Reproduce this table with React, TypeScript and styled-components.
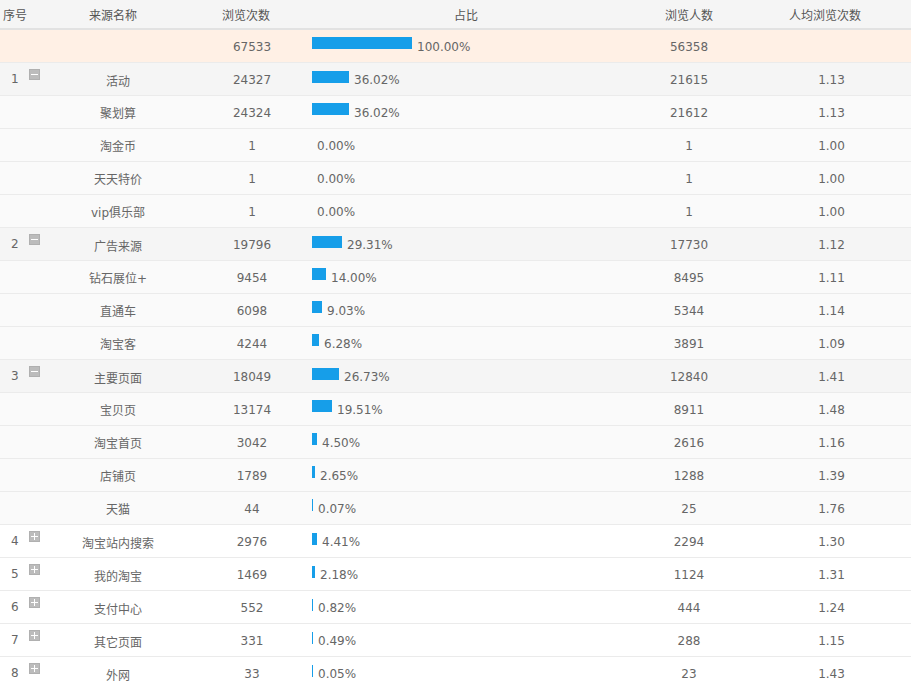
import React from "react";
import styled, { createGlobalStyle } from "styled-components";

const GlobalStyle = createGlobalStyle`
  body {
    margin: 0;
    background: #fff;
    font-family: "DejaVu Sans", "Noto Sans CJK SC", sans-serif;
    font-size: 12px;
    color: #666;
  }
`;

const cols = "62px 112px 132px 320px 126px 159px";

const Table = styled.div`
  width: 911px;
`;

const HeaderRow = styled.div`
  display: grid;
  grid-template-columns: ${cols};
  height: 28px;
  background: #f5f5f5;
  border-bottom: 2px solid #e2e2e2;
  color: #555;
`;

const HeadCell = styled.div<{ align?: string; pl?: number; pr?: number }>`
  display: flex;
  align-items: center;
  justify-content: ${(p) => p.align || "center"};
  padding-left: ${(p) => p.pl || 0}px;
  padding-right: ${(p) => p.pr || 0}px;
`;

type Kind = "total" | "group" | "child" | "single";

const bg: Record<Kind, string> = {
  total: "#fff0e5",
  group: "#f5f5f5",
  child: "#fafafa",
  single: "#ffffff",
};

const Row = styled.div<{ kind: Kind }>`
  display: grid;
  grid-template-columns: ${cols};
  height: 32px;
  background: ${(p) => bg[p.kind]};
  border-bottom: 1px solid #ebebeb;
`;

const Cell = styled.div<{ pl?: number }>`
  display: flex;
  align-items: center;
  justify-content: center;
  padding-top: 1px;
  padding-left: ${(p) => p.pl || 0}px;
`;

const IndexCell = styled.div`
  display: flex;
  align-items: flex-start;
  padding-left: 11px;
`;

const IndexNum = styled.span`
  width: 18px;
  line-height: 33px;
`;

const Toggle = styled.span<{ open: boolean }>`
  margin-top: 6px;
  width: 11px;
  height: 11px;
  box-sizing: border-box;
  background: #bcbcbc;
  border: 1px solid #b0b0b0;
  position: relative;
  &::before,
  &::after {
    content: "";
    position: absolute;
    background: #fff;
  }
  &::before {
    left: 1px;
    right: 1px;
    top: 4px;
    height: 1px;
  }
  &::after {
    display: ${(p) => (p.open ? "none" : "block")};
    top: 1px;
    bottom: 1px;
    left: 4px;
    width: 1px;
  }
`;

const RatioCell = styled.div`
  display: flex;
  align-items: center;
  padding-left: 6px;
  padding-top: 1px;
`;

const Bar = styled.span`
  display: inline-block;
  height: 12px;
  background: #169ee9;
  margin-right: 5px;
  margin-bottom: 7px;
`;

type Item = {
  idx?: number;
  name: string;
  views: string;
  pct: string;
  users: string;
  avg: string;
  kind: Kind;
};

const data: Item[] = [
  { name: "", views: "67533", pct: "100.00", users: "56358", avg: "", kind: "total" },
  { idx: 1, name: "活动", views: "24327", pct: "36.02", users: "21615", avg: "1.13", kind: "group" },
  { name: "聚划算", views: "24324", pct: "36.02", users: "21612", avg: "1.13", kind: "child" },
  { name: "淘金币", views: "1", pct: "0.00", users: "1", avg: "1.00", kind: "child" },
  { name: "天天特价", views: "1", pct: "0.00", users: "1", avg: "1.00", kind: "child" },
  { name: "vip俱乐部", views: "1", pct: "0.00", users: "1", avg: "1.00", kind: "child" },
  { idx: 2, name: "广告来源", views: "19796", pct: "29.31", users: "17730", avg: "1.12", kind: "group" },
  { name: "钻石展位+", views: "9454", pct: "14.00", users: "8495", avg: "1.11", kind: "child" },
  { name: "直通车", views: "6098", pct: "9.03", users: "5344", avg: "1.14", kind: "child" },
  { name: "淘宝客", views: "4244", pct: "6.28", users: "3891", avg: "1.09", kind: "child" },
  { idx: 3, name: "主要页面", views: "18049", pct: "26.73", users: "12840", avg: "1.41", kind: "group" },
  { name: "宝贝页", views: "13174", pct: "19.51", users: "8911", avg: "1.48", kind: "child" },
  { name: "淘宝首页", views: "3042", pct: "4.50", users: "2616", avg: "1.16", kind: "child" },
  { name: "店铺页", views: "1789", pct: "2.65", users: "1288", avg: "1.39", kind: "child" },
  { name: "天猫", views: "44", pct: "0.07", users: "25", avg: "1.76", kind: "child" },
  { idx: 4, name: "淘宝站内搜索", views: "2976", pct: "4.41", users: "2294", avg: "1.30", kind: "single" },
  { idx: 5, name: "我的淘宝", views: "1469", pct: "2.18", users: "1124", avg: "1.31", kind: "single" },
  { idx: 6, name: "支付中心", views: "552", pct: "0.82", users: "444", avg: "1.24", kind: "single" },
  { idx: 7, name: "其它页面", views: "331", pct: "0.49", users: "288", avg: "1.15", kind: "single" },
  { idx: 8, name: "外网", views: "33", pct: "0.05", users: "23", avg: "1.43", kind: "single" },
];

export default function App() {
  return (
    <Table>
      <GlobalStyle />
      <HeaderRow>
        <HeadCell align="flex-start" pl={3}>序号</HeadCell>
        <HeadCell pr={10}>来源名称</HeadCell>
        <HeadCell pl={12}>浏览次数</HeadCell>
        <HeadCell>占比</HeadCell>
        <HeadCell>浏览人数</HeadCell>
        <HeadCell pr={13}>人均浏览次数</HeadCell>
      </HeaderRow>
      {data.map((item, i) => {
        const w = Math.ceil(parseFloat(item.pct));
        return (
          <Row key={i} kind={item.kind}>
            <IndexCell>
              {item.idx !== undefined && (
                <>
                  <IndexNum>{item.idx}</IndexNum>
                  <Toggle open={item.kind === "group"} />
                </>
              )}
            </IndexCell>
            <Cell>{item.name}</Cell>
            <Cell pl={24}>{item.views}</Cell>
            <RatioCell>
              <Bar style={{ width: w }} />
              <span>{item.pct}%</span>
            </RatioCell>
            <Cell>{item.users}</Cell>
            <Cell>{item.avg}</Cell>
          </Row>
        );
      })}
    </Table>
  );
}
